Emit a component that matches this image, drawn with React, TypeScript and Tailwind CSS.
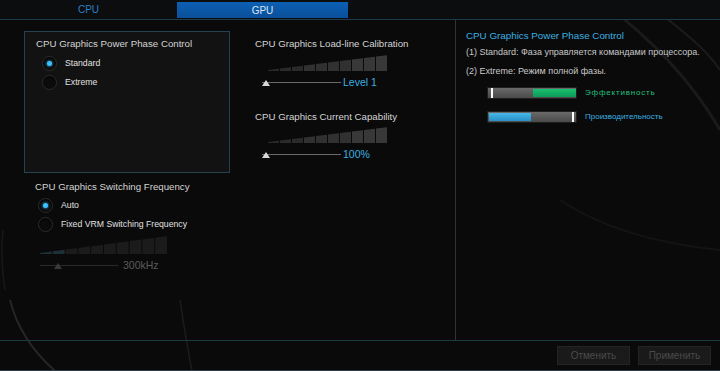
import React from "react";

const font = { fontFamily: '"Liberation Sans", Arial, sans-serif' };

function Wedge({ dim = false, w = 120, ht = 16 }: { dim?: boolean; w?: number; ht?: number }) {
  const bars = Array.from({ length: 10 }, (_, i) => i);
  const step = w / 10;
  const h = (x: number) => ht - (1 + (x / w) * (ht - 1));
  return (
    <svg width={w + 1} height={ht + 1} viewBox={`0 0 ${w + 1} ${ht + 1}`}>
      {bars.map((i) => {
        const x0 = i * step;
        const x1 = x0 + step - 1;
        const fill = dim
          ? i < 2
            ? "#1d3036"
            : "#1b1b1b"
          : i < 3
            ? "#2a2a2a"
            : i < 7
              ? "#313131"
              : "#383838";
        return (
          <polygon
            key={i}
            points={`${x0},${h(x0)} ${x1},${h(x1)} ${x1},${ht} ${x0},${ht}`}
            fill={fill}
          />
        );
      })}
    </svg>
  );
}

function Slider({
  value,
  dim = false,
  thumbAt = 0,
  w = 120,
  ht = 16,
  track = 79,
  shift = 6,
  gap = 2,
}: {
  value: string;
  dim?: boolean;
  thumbAt?: number;
  w?: number;
  ht?: number;
  track?: number;
  shift?: number;
  gap?: number;
}) {
  return (
    <div>
      <Wedge dim={dim} w={w} ht={ht} />
      <div className="flex items-center mt-[5px] h-[10px]" style={{ marginLeft: -shift }}>
        <div className="relative h-[10px] flex items-center" style={{ width: track }}>
          <div
            className={`w-full h-px ${dim ? "bg-[#2a2a2a]" : "bg-[#6a6a6a]"}`}
          />
          <svg
            className="absolute top-[3px]"
            style={{ left: thumbAt }}
            width="8"
            height="6"
            viewBox="0 0 8 6"
          >
            <polygon
              points="4,0 8,6 0,6"
              fill={dim ? "#3a3a3a" : "#d8d8d8"}
            />
          </svg>
        </div>
        <span
          className={`text-[10.5px] leading-none ${dim ? "text-[#5a5a5a]" : "text-[#3ab0e0]"}`}
          style={{ marginLeft: gap }}
        >
          {value}
        </span>
      </div>
    </div>
  );
}

function Radio({ label, checked }: { label: string; checked?: boolean }) {
  return (
    <div className="flex items-center h-[19px]">
      <div className="w-[15px] h-[15px] rounded-full bg-[#0b0b0b] border border-[#2c2c2c] shadow-[inset_0_1px_2px_rgba(0,0,0,0.9)] flex items-center justify-center">
        {checked && (
          <div className="w-[5px] h-[5px] rounded-full bg-[#3cc0ff] shadow-[0_0_3px_#3cc0ff]" />
        )}
      </div>
      <span className="ml-[8px] text-[8.7px] text-[#e0e0e0]">{label}</span>
    </div>
  );
}

function Meter({
  fillFrom,
  fillTo,
  color,
  marker,
}: {
  fillFrom: number;
  fillTo: number;
  color: string;
  marker: number;
}) {
  return (
    <div className="relative w-[90px] h-[12px] bg-gradient-to-b from-[#6a6a6a] to-[#4a4a4a] border border-[#1e1e1e]">
      <div
        className={`absolute top-[1px] bottom-[1px] ${color}`}
        style={{ left: fillFrom, width: fillTo - fillFrom }}
      />
      <div
        className="absolute top-0 bottom-0 w-[2px] bg-white"
        style={{ left: marker }}
      />
    </div>
  );
}

export default function App() {
  return (
    <div
      className="relative w-[720px] h-[371px] bg-[#0a0a0a] overflow-hidden text-[#d8d8d8]"
      style={font}
    >
      <svg
        className="absolute inset-0 pointer-events-none"
        width="720"
        height="371"
      >
        <path d="M10 300 Q 20 340 55 371" stroke="#262626" strokeWidth="2" fill="none" />
        <path d="M3 230 Q 0 260 5 290" stroke="#181818" strokeWidth="1.5" fill="none" />
        <path d="M180 300 Q 186 340 192 371" stroke="#1c1c1c" strokeWidth="1.5" fill="none" />
        <path d="M600 0 Q 680 60 720 130" stroke="#1a1a1a" strokeWidth="3" fill="none" />
        <path d="M640 0 Q 700 40 720 70" stroke="#1c1c1c" strokeWidth="2" fill="none" />
        <path d="M560 200 Q 620 240 720 250" stroke="#141414" strokeWidth="2" fill="none" />
      </svg>

      <div className="relative flex flex-col h-full">
        <div className="flex h-[20px] border-b border-[#1c3a4c] bg-[#0c0d0e]">
          <div className="w-[177px] flex items-center justify-center text-[10px] text-[#2b82c8]">
            CPU
          </div>
          <div className="w-[171px] mt-[2px] h-[16px] flex items-center justify-center text-[10px] text-[#dbe6f2] bg-gradient-to-b from-[#0d60b4] to-[#0a4f9a]">
            GPU
          </div>
        </div>

        <div className="flex h-[320px]">
          <div className="w-[456px] border-r border-[#333333] flex">
            <div className="pl-[24px] pt-[11px] w-[230px]">
              <div className="w-[206px] h-[142px] border border-[#27424f] bg-[#121212] pl-[11px] pt-[6px]">
                <div className="text-[9.7px] leading-[12px] text-[#d4d4d4]">
                  CPU Graphics Power Phase Control
                </div>
                <div className="mt-[4px] ml-[6px]">
                  <Radio label="Standard" checked />
                  <Radio label="Extreme" />
                </div>
              </div>
              <div className="pl-[11px] pt-[8px]">
                <div className="text-[9.7px] leading-[12px] text-[#d4d4d4]">
                  CPU Graphics Switching Frequency
                </div>
                <div className="mt-[3px] ml-[3px]">
                  <Radio label="Auto" checked />
                  <Radio label="Fixed VRM Switching Frequency" />
                </div>
                <div className="mt-[2px] ml-[5px]">
                  <Slider
                    value="300kHz"
                    dim
                    w={128}
                    ht={18}
                    track={78}
                    shift={0}
                    gap={5}
                    thumbAt={14}
                  />
                </div>
              </div>
            </div>

            <div className="pl-[25px] pt-[18px]">
              <div className="text-[9.7px] leading-[12px] text-[#d4d4d4]">
                CPU Graphics Load-line Calibration
              </div>
              <div className="mt-[5px] ml-[13px]">
                <Slider value="Level 1" />
              </div>
              <div className="mt-[24px] text-[9.7px] leading-[12px] text-[#d4d4d4]">
                CPU Graphics Current Capability
              </div>
              <div className="mt-[4px] ml-[13px]">
                <Slider value="100%" />
              </div>
            </div>
          </div>

          <div className="flex-1 pl-[10px] pt-[10px]">
            <div className="text-[9.8px] leading-[12px] text-[#3ab0e0]">
              CPU Graphics Power Phase Control
            </div>
            <div className="mt-[5px] text-[9px] leading-[11px] text-[#c8c8c8]">
              (1) Standard: Фаза управляется командами процессора.
            </div>
            <div className="mt-[8px] text-[9px] leading-[11px] text-[#c8c8c8]">
              (2) Extreme: Режим полной фазы.
            </div>
            <div className="mt-[10px] ml-[21px] flex items-center">
              <Meter
                fillFrom={45}
                fillTo={88}
                color="bg-gradient-to-b from-[#18c070] to-[#0e9a58]"
                marker={3}
              />
              <span className="ml-[8px] text-[8px] tracking-[0.8px] text-[#20c080]">
                Эффективность
              </span>
            </div>
            <div className="mt-[12px] ml-[21px] flex items-center">
              <Meter
                fillFrom={1}
                fillTo={43}
                color="bg-gradient-to-b from-[#46b8e8] to-[#2a90c8]"
                marker={84}
              />
              <span className="ml-[8px] text-[8px] text-[#3ab0e0]">
                Производительность
              </span>
            </div>
          </div>
        </div>

        <div className="flex-1 border-t border-[#1a3a46] border-b border-b-[#2c3c48] flex items-center justify-end pr-[9px] gap-[8px]">
          <button className="w-[73px] h-[19px] bg-[#1a1a1a] border border-[#242424] text-[10px] text-[#4a4a4a]">
            Отменить
          </button>
          <button className="w-[73px] h-[19px] bg-[#1a1a1a] border border-[#242424] text-[10px] text-[#4a4a4a]">
            Применить
          </button>
        </div>
      </div>
    </div>
  );
}
